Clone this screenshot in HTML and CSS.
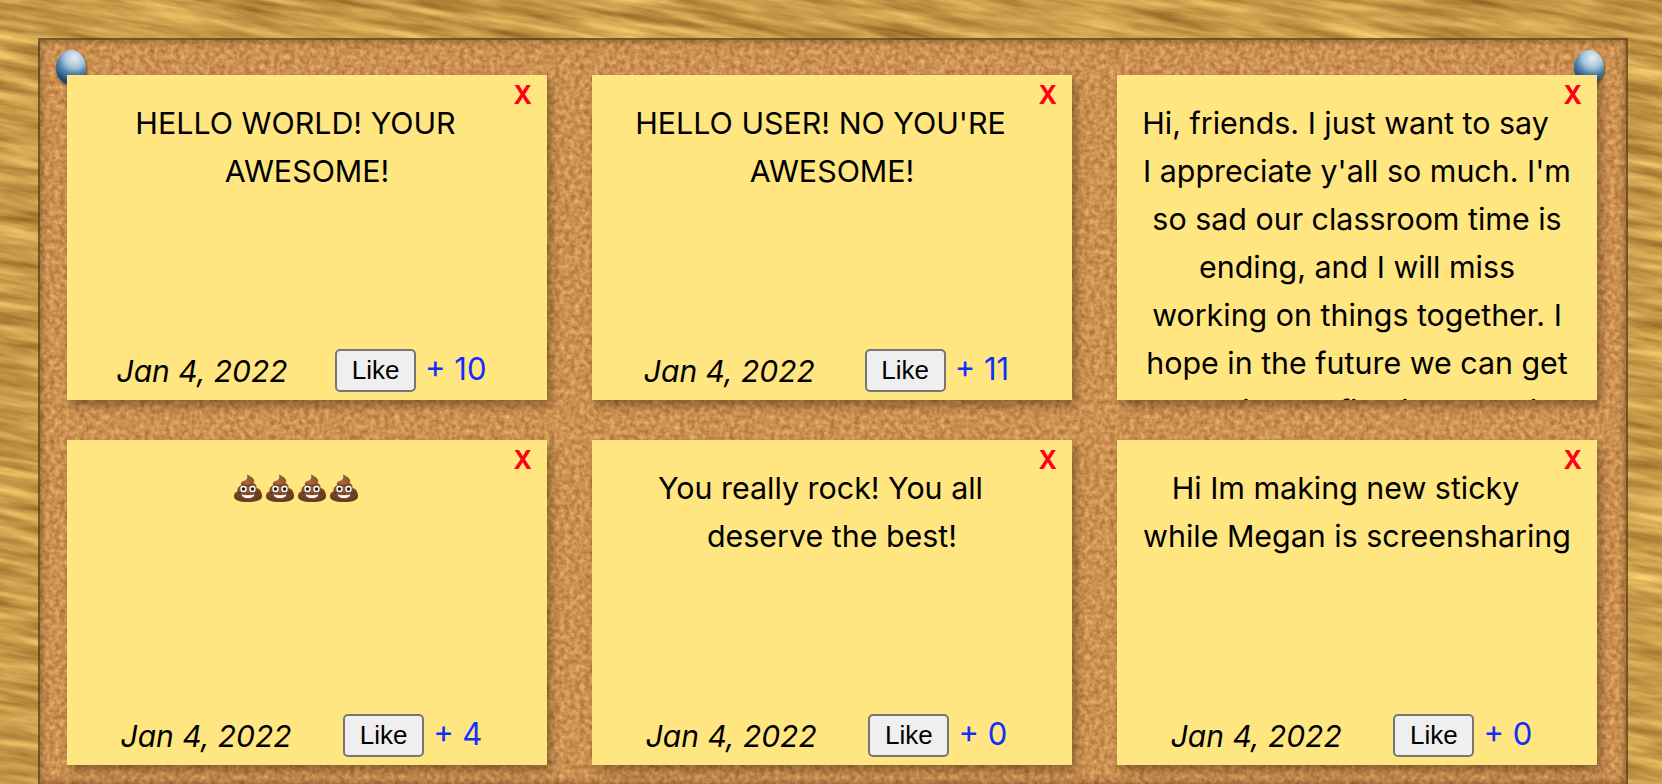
FILE: index.html

```html
<!DOCTYPE html>
<html lang="en">
<head>
  <meta charset="UTF-8" />
  <title>Sticky Board</title>
  <link rel="stylesheet" href="styles.css">
</head>
<body>
  <svg class="texture" width="0" height="0">
    <filter id="woodGrain" x="0" y="0" width="100%" height="100%" color-interpolation-filters="sRGB">
      <feTurbulence type="fractalNoise" baseFrequency="0.011 0.1" numOctaves="5" seed="7" />
      <feColorMatrix values="0.5 0 0 0 0.53  0.55 0 0 0 0.335  0.4 0 0 0 0.09  0 0 0 0 1" />
    </filter>
    <filter id="corkGrain" x="0" y="0" width="100%" height="100%" color-interpolation-filters="sRGB">
      <feTurbulence type="fractalNoise" baseFrequency="0.2" numOctaves="3" seed="3" />
      <feColorMatrix values="0.34 0 0 0 0.63  0.38 0 0 0 0.38  0.3 0 0 0 0.17  0 0 0 0 1" />
    </filter>
    <radialGradient id="poopBody" cx="45%" cy="30%" r="80%">
      <stop offset="0" stop-color="#a8683c" />
      <stop offset="1" stop-color="#5d3318" />
    </radialGradient>
    <symbol id="poop" viewBox="0 0 28 28">
      <path fill="url(#poopBody)" d="M13 0c2 2 6 3 7 6 .5 1.500 0 2.500-.5 3 2 .5 3.500 2.500 3 5 2.500.5 4 2 4.500 4 1 1.500 1 3 1 4 0 4-5 6-14 6S0 26 0 22c0-2 1-4 3.500-4.500C3 15 4 12.500 7 11.500 6 9 8 7 11 6.500 13 5.500 14 3 13 0z" />
      <path fill="none" stroke="#4a2811" stroke-width=".8" d="M8 10.500c3 1.500 8 1.500 11-1M3.500 18c1 .8 2 1.200 3 1.400M24 18.500c-1 .8-2 1.100-3 1.300" />
      <circle cx="9.500" cy="15" r="3.200" fill="#fff" />
      <circle cx="18.500" cy="15" r="3.200" fill="#fff" />
      <circle cx="9.500" cy="15" r="1.800" fill="#23232b" />
      <circle cx="18.500" cy="15" r="1.800" fill="#23232b" />
      <path fill="#fff" d="M7.500 20.500c4 1 9 1 13 0-.8 2.600-3.200 3.800-6.500 3.800s-5.700-1.200-6.500-3.800z" />
    </symbol>
  </svg>

  <div class="wood-frame">
    <div class="wood"></div>
  </div>

  <div class="board">
    <div class="cork"></div>
    <span class="pin pin-left"></span>
    <span class="pin pin-right"></span>

    <div class="notes">
      <div class="note">
        <span class="remove">X</span>
        <div class="note-text">HELLO WORLD! YOUR<br>AWESOME!</div>
        <div class="note-footer">
          <em class="date">Jan 4, 2022</em>
          <div class="likes">
            <button class="like">Like</button>
            <span class="count">+ 10</span>
          </div>
        </div>
      </div>

      <div class="note">
        <span class="remove">X</span>
        <div class="note-text">HELLO USER! NO YOU'RE<br>AWESOME!</div>
        <div class="note-footer">
          <em class="date">Jan 4, 2022</em>
          <div class="likes">
            <button class="like">Like</button>
            <span class="count">+ 11</span>
          </div>
        </div>
      </div>

      <div class="note">
        <span class="remove">X</span>
        <div class="note-text">Hi, friends. I just want to say<br>I appreciate y'all so much. I'm<br>so sad our classroom time is<br>ending, and I will miss<br>working on things together. I<br>hope in the future we can get<br>more time to fix bits and win.</div>
      </div>

      <div class="note">
        <span class="remove">X</span>
        <div class="note-text">
          <span class="emoji-row">
            <svg class="emoji"><use href="#poop" /></svg>
            <svg class="emoji"><use href="#poop" /></svg>
            <svg class="emoji"><use href="#poop" /></svg>
            <svg class="emoji"><use href="#poop" /></svg>
          </span>
        </div>
        <div class="note-footer">
          <em class="date">Jan 4, 2022</em>
          <div class="likes">
            <button class="like">Like</button>
            <span class="count">+ 4</span>
          </div>
        </div>
      </div>

      <div class="note">
        <span class="remove">X</span>
        <div class="note-text">You really rock! You all<br>deserve the best!</div>
        <div class="note-footer">
          <em class="date">Jan 4, 2022</em>
          <div class="likes">
            <button class="like">Like</button>
            <span class="count">+ 0</span>
          </div>
        </div>
      </div>

      <div class="note">
        <span class="remove">X</span>
        <div class="note-text">Hi Im making new sticky<br>while Megan is screensharing</div>
        <div class="note-footer">
          <em class="date">Jan 4, 2022</em>
          <div class="likes">
            <button class="like">Like</button>
            <span class="count">+ 0</span>
          </div>
        </div>
      </div>
    </div>
  </div>
</body>
</html>
```

FILE: styles.css

```css
html,
body {
  height: 100%;
  overflow: hidden;
}

body {
  margin: 0;
  background: #c99d48;
  font-family: Inter, "Liberation Sans", sans-serif;
  color: #000;
}

.texture {
  position: absolute;
}

.wood-frame {
  position: absolute;
  inset: 0;
  overflow: hidden;
}

.wood {
  position: absolute;
  inset: -300px;
  transform: rotate(10deg);
  filter: url(#woodGrain);
}

.board {
  position: relative;
  box-sizing: border-box;
  height: calc(100% - 38px);
  margin: 38px 34px 0 38px;
  border: 2px solid rgba(85, 60, 25, 0.75);
  border-bottom: none;
}

.cork {
  position: absolute;
  inset: 0;
  overflow: hidden;
  filter: url(#corkGrain);
}

.board::after {
  content: "";
  position: absolute;
  inset: 0;
  box-shadow: inset 0 0 7px 1px rgba(70, 40, 10, 0.5);
  pointer-events: none;
}

.pin {
  position: absolute;
  top: 10px;
  width: 30px;
  height: 35px;
  border-radius: 50%;
  background: radial-gradient(circle at 62% 22%, #e6eff5 0, #a6c5da 30%, #4f83aa 50%, #1b4d7c 74%, #0d2c4c 100%);
  box-shadow: 1px 2px 3px rgba(30, 20, 10, 0.6);
}

.pin-left {
  left: 16px;
}

.pin-right {
  right: 22px;
}

.notes {
  position: relative;
  z-index: 1;
  display: grid;
  grid-template-columns: repeat(3, 480px);
  gap: 40px 45px;
  padding: 35px 0 0 27px;
}

.note {
  height: 325px;
  padding: 24px 24px 0;
  box-sizing: border-box;
  overflow: hidden;
  background: #ffe680;
  text-align: center;
  box-shadow: 4px 6px 9px rgba(60, 35, 10, 0.45);
}

.remove {
  float: right;
  width: 32px;
  height: 40px;
  margin: -19px -9px 0 0;
  color: #ff0018;
  font-size: 25px;
  font-weight: 700;
  line-height: 30px;
  text-align: right;
  cursor: pointer;
}

.note-text {
  min-height: 250px;
  font-size: 30.4px;
  line-height: 48px;
  white-space: nowrap;
}

.emoji-row {
  display: inline-flex;
  gap: 4px;
  vertical-align: -3px;
}

.emoji {
  width: 28px;
  height: 28px;
}

.note-footer {
  display: flex;
  justify-content: space-evenly;
  align-items: center;
  margin: 0 -11px 0 -22px;
}

.date {
  font-size: 30px;
}

.likes {
  display: flex;
  align-items: center;
  gap: 9px;
}

.like {
  width: 81px;
  height: 43px;
  padding: 0;
  background: #efefef;
  border: 2px solid #767676;
  border-radius: 5px;
  font-family: "Liberation Sans", sans-serif;
  font-size: 26px;
  color: #000;
}

.count {
  margin-top: -4px;
  color: #0f2fff;
  font-size: 31px;
}
```
